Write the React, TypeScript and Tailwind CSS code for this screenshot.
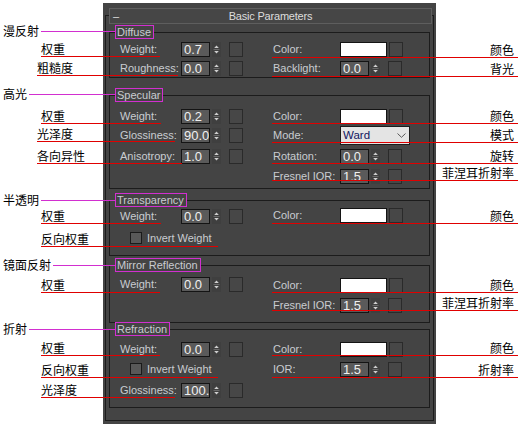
import React from "react";

const UI_FONT = "font-['Liberation_Sans',Arial,sans-serif]";
const CJK_FONT = "font-['Noto_Sans_CJK_SC','Noto_Sans',sans-serif]";

function Spinner() {
  return (
    <svg width="9" height="15" viewBox="0 0 9 15" className="ml-[2px] shrink-0">
      <rect width="9" height="15" fill="#3f3f3f" />
      <path d="M2.2 6 L4.5 3.4 L6.8 6 Z" fill="#cfcfcf" />
      <line x1="1.5" y1="7.5" x2="7.5" y2="7.5" stroke="#6a6a6a" strokeWidth="1" />
      <path d="M2.2 9 L4.5 11.6 L6.8 9 Z" fill="#cfcfcf" />
    </svg>
  );
}

function MapButton() {
  return <div className="h-[15px] w-[14px] shrink-0 border border-[#2a2a2a] bg-[#474747]" />;
}

function NumField({ value }: { value: string }) {
  return (
    <div className="flex h-[15px] items-center">
      <div className="h-[15px] w-[29px] overflow-hidden whitespace-nowrap border border-[#141414] bg-[#5a5a5a] pl-[2px] text-[13px] leading-[13px] text-[#f0f0f0]">
        {value}
      </div>
      <Spinner />
      <div className="ml-[8px]">
        <MapButton />
      </div>
    </div>
  );
}

function ColorField() {
  return (
    <div className="flex h-[15px] items-center gap-[2px]">
      <div className="h-[15px] w-[47px] border border-[#141414] bg-white" />
      <MapButton />
    </div>
  );
}

function ModeSelect() {
  return (
    <div className="flex h-[19px] w-[70px] items-center justify-between border border-[#1c1c1c] bg-[#e4e4e4] pl-[2px] pr-[3px]">
      <span className="text-[11.5px] leading-[13px] text-[#12145e]">Ward</span>
      <svg width="9" height="5" viewBox="0 0 9 5">
        <path d="M0.5 0.5 L4.5 4.3 L8.5 0.5" fill="none" stroke="#5a5a5a" strokeWidth="1" />
      </svg>
    </div>
  );
}

function LeftRow({ label, children, className = "" }: { label: string; children: React.ReactNode; className?: string }) {
  return (
    <div className={`flex h-[15px] items-center ${className}`}>
      <span className="w-[61px] shrink-0 whitespace-nowrap text-[11px] text-[#c9ccd1]">{label}</span>
      {children}
    </div>
  );
}

function RightRow({ label, children, className = "", tall = false }: { label: string; children: React.ReactNode; className?: string; tall?: boolean }) {
  return (
    <div className={`flex items-center ${tall ? "h-[19px]" : "h-[15px]"} ${className}`}>
      <span className="w-[67px] shrink-0 whitespace-nowrap text-[11px] text-[#c9ccd1]">{label}</span>
      {children}
    </div>
  );
}

function CheckRow({ className = "" }: { className?: string }) {
  return (
    <div className={`flex h-[12px] items-center pl-[10px] ${className}`}>
      <div className="h-[12px] w-[12px] border border-[#1a1a1a] bg-[#585858]" />
      <span className="ml-[5px] whitespace-nowrap text-[11px] text-[#c9ccd1]">Invert Weight</span>
    </div>
  );
}

function Group({ title, className, children }: { title: string; className: string; children: React.ReactNode }) {
  return (
    <div className={`relative mx-[3px] w-[321px] border border-[#1c1c1c] ${className}`}>
      <span className="absolute left-[5px] top-[-8px] h-[14px] whitespace-nowrap border border-[#d22fd0] bg-[#444444] pl-[1px] pr-[2px] text-[11px] leading-[12px] text-[#c9ccd1]">
        {title}
      </span>
      <div className="grid h-full grid-cols-[153px_1fr] pl-[10px]">{children}</div>
    </div>
  );
}

const leftNotes = [
  { text: "权重", cls: "top-[43px] left-[37px] w-[123px] pl-[4px]" },
  { text: "粗糙度", cls: "top-[62px] left-[37px] w-[141px]" },
  { text: "权重", cls: "top-[110px] left-[37px] w-[124px] pl-[4px]" },
  { text: "光泽度", cls: "top-[128px] left-[37px] w-[138px]" },
  { text: "各向异性", cls: "top-[150px] left-[37px] w-[145px]" },
  { text: "权重", cls: "top-[210px] left-[37px] w-[124px] pl-[4px]" },
  { text: "反向权重", cls: "top-[233px] left-[37px] w-[181px] pl-[4px]" },
  { text: "权重", cls: "top-[279px] left-[37px] w-[123px] pl-[4px]" },
  { text: "权重", cls: "top-[342px] left-[37px] w-[123px] pl-[4px]" },
  { text: "反向权重", cls: "top-[364px] left-[37px] w-[181px] pl-[4px]" },
  { text: "光泽度", cls: "top-[384px] left-[37px] w-[138px] pl-[4px]" },
];

const rightNotes = [
  { text: "颜色", cls: "top-[44px]" },
  { text: "背光", cls: "top-[63px]" },
  { text: "颜色", cls: "top-[110px]" },
  { text: "模式", cls: "top-[129px]" },
  { text: "旋转", cls: "top-[150px]" },
  { text: "菲涅耳折射率", cls: "top-[167px]" },
  { text: "颜色", cls: "top-[210px]" },
  { text: "颜色", cls: "top-[279px]" },
  { text: "菲涅耳折射率", cls: "top-[297px]" },
  { text: "颜色", cls: "top-[342px]" },
  { text: "折射率", cls: "top-[364px]" },
];

const sectionNotes = [
  { text: "漫反射", cls: "top-[25px]" },
  { text: "高光", cls: "top-[88px]" },
  { text: "半透明", cls: "top-[194px]" },
  { text: "镜面反射", cls: "top-[259px]" },
  { text: "折射", cls: "top-[323px]" },
];

export default function App() {
  return (
    <div className={`relative h-[427px] w-[522px] overflow-hidden bg-white ${UI_FONT}`}>
      {/* rollout panel */}
      <div className="pl-[103px] pt-[3px]">
        <div className="h-[421px] w-[333px] bg-[#444444] pl-[2px] pt-[5px]">
          <div className="relative z-10 ml-[4px] flex h-[16px] w-[323px] items-center border border-[#5e5e5e] bg-[#464646] text-[11px] text-[#dddddd]">
            <span className="absolute left-[3px] top-[-1px]">–</span>
            <span className="w-full text-center tracking-[-0.2px]">Basic Parameters</span>
          </div>
          <div className="-mt-[9px] w-[329px] border border-[#1c1c1c] pb-[12px] pt-[16px]">
            <Group title="Diffuse" className="h-[46px]">
              <div className="flex flex-col gap-[4px] pt-[9px]">
                <LeftRow label="Weight:"><NumField value="0.7" /></LeftRow>
                <LeftRow label="Roughness:"><NumField value="0.0" /></LeftRow>
              </div>
              <div className="flex flex-col gap-[4px] pt-[9px]">
                <RightRow label="Color:"><ColorField /></RightRow>
                <RightRow label="Backlight:"><NumField value="0.0" /></RightRow>
              </div>
            </Group>

            <Group title="Specular" className="mt-[17px] h-[94px]">
              <div className="flex flex-col pt-[13px]">
                <LeftRow label="Weight:"><NumField value="0.2" /></LeftRow>
                <LeftRow label="Glossiness:" className="mt-[4px]"><NumField value="90.0" /></LeftRow>
                <LeftRow label="Anisotropy:" className="mt-[6px]"><NumField value="1.0" /></LeftRow>
              </div>
              <div className="flex flex-col pt-[13px]">
                <RightRow label="Color:"><ColorField /></RightRow>
                <RightRow label="Mode:" tall className="mt-[2px]"><ModeSelect /></RightRow>
                <RightRow label="Rotation:" className="mt-[4px]"><NumField value="0.0" /></RightRow>
                <RightRow label="Fresnel IOR:" className="mt-[5px]"><NumField value="1.5" /></RightRow>
              </div>
            </Group>

            <Group title="Transparency" className="mt-[11px] h-[56px]">
              <div className="flex flex-col pt-[8px]">
                <LeftRow label="Weight:"><NumField value="0.0" /></LeftRow>
                <CheckRow className="mt-[8px]" />
              </div>
              <div className="flex flex-col pt-[7px]">
                <RightRow label="Color:"><ColorField /></RightRow>
              </div>
            </Group>

            <Group title="Mirror Reflection" className="mt-[9px] h-[58px]">
              <div className="flex flex-col pt-[11px]">
                <LeftRow label="Weight:"><NumField value="0.0" /></LeftRow>
              </div>
              <div className="flex flex-col pt-[12px]">
                <RightRow label="Color:"><ColorField /></RightRow>
                <RightRow label="Fresnel IOR:" className="mt-[5px]"><NumField value="1.5" /></RightRow>
              </div>
            </Group>

            <Group title="Refraction" className="mt-[6px] h-[79px]">
              <div className="flex flex-col pt-[12px]">
                <LeftRow label="Weight:"><NumField value="0.0" /></LeftRow>
                <CheckRow className="mt-[6px]" />
                <LeftRow label="Glossiness:" className="mt-[8px]"><NumField value="100.0" /></LeftRow>
              </div>
              <div className="flex flex-col pt-[12px]">
                <RightRow label="Color:"><ColorField /></RightRow>
                <RightRow label="IOR:" className="mt-[5px]"><NumField value="1.5" /></RightRow>
              </div>
            </Group>
          </div>
        </div>
      </div>

      {/* annotations */}
      {sectionNotes.map((n) => (
        <div key={n.text} className={`absolute left-[3px] flex h-[12px] w-[112px] items-center ${n.cls} ${CJK_FONT}`}>
          <span className="whitespace-nowrap text-[12px] leading-[12px] text-black">{n.text}</span>
          <div className="ml-[2px] h-px flex-1 bg-[#d22fd0]" />
        </div>
      ))}
      {leftNotes.map((n, i) => (
        <div key={i} className={`absolute flex flex-col ${n.cls} ${CJK_FONT}`}>
          <span className="h-[12px] whitespace-nowrap text-[12px] leading-[12px] text-black">{n.text}</span>
          <div className="mt-[1px] h-px w-full bg-[#e00000]" />
        </div>
      ))}
      {rightNotes.map((n, i) => (
        <div key={i} className={`absolute left-[272px] flex w-[246px] flex-col items-end ${n.cls} ${CJK_FONT}`}>
          <span className="h-[12px] whitespace-nowrap pr-[4px] text-[12px] leading-[12px] text-black">{n.text}</span>
          <div className="mt-[1px] h-px w-full bg-[#e00000]" />
        </div>
      ))}
    </div>
  );
}
